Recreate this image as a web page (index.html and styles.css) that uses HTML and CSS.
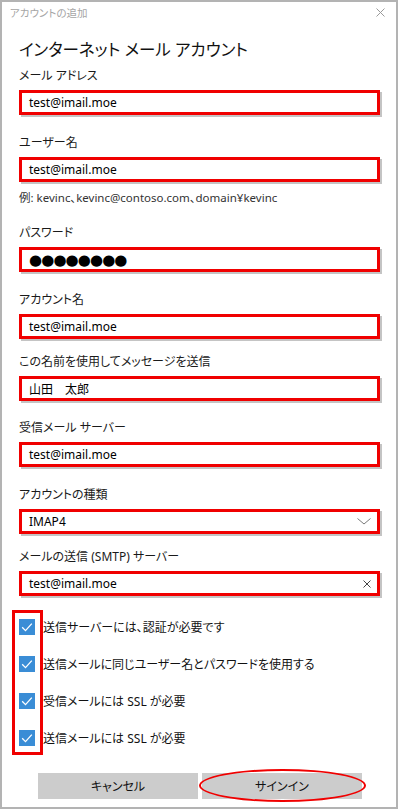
FILE: index.html
```html
<!DOCTYPE html>
<html lang="ja">
<head>
<meta charset="utf-8">
<title>アカウントの追加</title>
<link rel="stylesheet" href="styles.css">
</head>
<body>
<div class="frame">
  <div class="titlebar">
    <span class="title">アカウントの追加</span>
    <svg class="close" width="9" height="9" viewBox="0 0 9 9"><path d="M0.5 0.5 L8.5 8.5 M8.5 0.5 L0.5 8.5" stroke="#9a9a9a" stroke-width="1" fill="none"/></svg>
  </div>
  <div class="content">
    <h1 class="heading">インターネット メール アカウント</h1>

    <div class="field f1">
      <div class="lbl">メール アドレス</div>
      <div class="box">test@imail.moe</div>
    </div>

    <div class="field f2">
      <div class="lbl">ユーザー名</div>
      <div class="box">test@imail.moe</div>
    </div>
    <div class="hint">例: kevinc、kevinc@contoso.com、domain¥kevinc</div>

    <div class="field f3">
      <div class="lbl">パスワード</div>
      <div class="box"><span class="dots">●●●●●●●●</span></div>
    </div>

    <div class="field f2">
      <div class="lbl">アカウント名</div>
      <div class="box">test@imail.moe</div>
    </div>

    <div class="field f5">
      <div class="lbl">この名前を使用してメッセージを送信</div>
      <div class="box">山田　太郎</div>
    </div>

    <div class="field f6">
      <div class="lbl">受信メール サーバー</div>
      <div class="box">test@imail.moe</div>
    </div>

    <div class="field f2">
      <div class="lbl">アカウントの種類</div>
      <div class="box">
        <span>IMAP4</span>
        <svg class="chev" width="14" height="7" viewBox="0 0 14 7"><path d="M0.5 0.5 L7 6 L13.5 0.5" stroke="#7a7a7a" stroke-width="1" fill="none"/></svg>
      </div>
    </div>

    <div class="field f5">
      <div class="lbl">メールの送信 (SMTP) サーバー</div>
      <div class="box">
        <span>test@imail.moe</span>
        <svg class="clear" width="8" height="8" viewBox="0 0 8 8"><path d="M0.5 0.5 L7.5 7.5 M7.5 0.5 L0.5 7.5" stroke="#444" stroke-width="1" fill="none"/></svg>
      </div>
    </div>

    <div class="checks">
      <div class="check-row"><span class="cb"><svg width="16" height="16" viewBox="0 0 16 16"><path d="M3.2 8.3 L6.5 11.6 L12.8 4.6" stroke="#fff" stroke-width="1.3" fill="none"/></svg></span><span class="ctext">送信サーバーには、認証が必要です</span></div>
      <div class="check-row"><span class="cb"><svg width="16" height="16" viewBox="0 0 16 16"><path d="M3.2 8.3 L6.5 11.6 L12.8 4.6" stroke="#fff" stroke-width="1.3" fill="none"/></svg></span><span class="ctext">送信メールに同じユーザー名とパスワードを使用する</span></div>
      <div class="check-row"><span class="cb"><svg width="16" height="16" viewBox="0 0 16 16"><path d="M3.2 8.3 L6.5 11.6 L12.8 4.6" stroke="#fff" stroke-width="1.3" fill="none"/></svg></span><span class="ctext">受信メールには SSL が必要</span></div>
      <div class="check-row"><span class="cb"><svg width="16" height="16" viewBox="0 0 16 16"><path d="M3.2 8.3 L6.5 11.6 L12.8 4.6" stroke="#fff" stroke-width="1.3" fill="none"/></svg></span><span class="ctext">送信メールには SSL が必要</span></div>
      <div class="mark-rect"></div>
    </div>

    <div class="buttons">
      <div class="btn">キャンセル</div>
      <div class="btn primary">サインイン<span class="mark-ellipse"></span></div>
    </div>
  </div>
</div>
</body>
</html>
```

FILE: styles.css
```css
* { box-sizing: border-box; }
html, body { margin: 0; padding: 0; background: #fff; }
body {
  font-family: "Noto Sans", "Noto Sans CJK JP", sans-serif;
  font-feature-settings: "palt";
  color: #111;
  font-size: 12px;
}
.frame {
  width: 398px;
  height: 809px;
  border: 2px solid #b3b3b3;
  position: relative;
}
.titlebar {
  height: 20px;
  display: flex;
  align-items: center;
  justify-content: space-between;
  padding: 0 11px 0 8px;
}
.title {
  font-size: 10.5px;
  color: #a5a5a5;
}
.close { display: block; }
.content { padding: 0 15px 0 17px; }
.heading {
  margin: 16px 0 0 0;
  font-size: 16.5px;
  font-weight: normal;
  line-height: 24px;
  color: #111;
}
.field { margin-top: 18px; }
.field.f1 { margin-top: 4px; }
.field.f3 { margin-top: 15px; }
.field.f5 { margin-top: 13px; }
.field.f6 { margin-top: 17px; }
.lbl {
  line-height: 20px;
  margin-bottom: 4px;
  font-size: 12px;
  color: #1a1a1a;
}
.box {
  width: 361px;
  height: 25px;
  border: 3px solid #f00000;
  box-shadow: 2px 2px 0 #c4c4c4;
  padding: 0 6px 0 7px;
  display: flex;
  align-items: center;
  justify-content: space-between;
  font-size: 12px;
  color: #000;
}
.dots {
  font-family: "DejaVu Sans", sans-serif;
  font-size: 15px;
  letter-spacing: -0.9px;
}
.chev, .clear { display: block; }
.hint {
  margin-top: 6px;
  line-height: 20px;
  font-size: 11.5px;
  color: #333;
}
.checks {
  margin-top: 12px;
  position: relative;
}
.check-row {
  height: 37px;
  display: flex;
  align-items: center;
  gap: 8px;
}
.cb {
  width: 16px;
  height: 16px;
  background: #3a8dd6;
  display: block;
}
.cb svg { display: block; }
.ctext { font-size: 12px; color: #111; }
.mark-rect {
  position: absolute;
  left: -7px;
  top: 2px;
  width: 31px;
  height: 145px;
  border: 3px solid #f00000;
}
.buttons {
  margin-top: 17px;
  display: flex;
  justify-content: center;
  gap: 4px;
}
.btn {
  width: 160px;
  height: 26px;
  background: #cccccc;
  display: flex;
  align-items: center;
  justify-content: center;
  font-size: 12px;
  color: #111;
  position: relative;
}
.mark-ellipse {
  position: absolute;
  left: -3px;
  top: -4px;
  width: 167px;
  height: 33px;
  border: 2px solid #f00000;
  border-radius: 50%;
}
```
